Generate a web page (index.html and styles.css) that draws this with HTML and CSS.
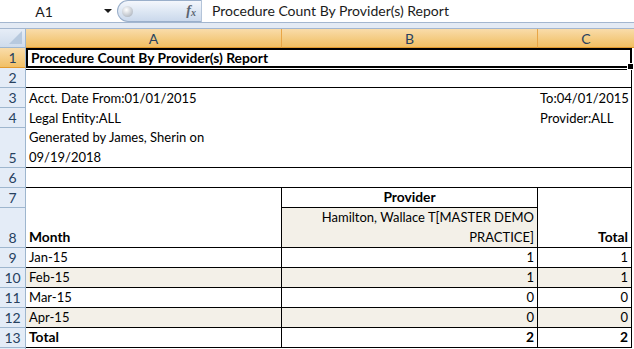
FILE: index.html
```html
<!DOCTYPE html>
<html lang="en">

<head>
    <meta charset="UTF-8">
    <meta name="viewport" content="width=device-width, initial-scale=1.0">
    <title>Procedure Count By Provider(s) Report</title>

    <!-- CSS styling -->
    <link rel="stylesheet" href="styles.css">
</head>

<body>
    <!-- Formula bar -->
    <div class="formula-bar">
        <div class="name-box">
            <span class="ref">A1</span>
            <span class="caret"></span>
        </div>
        <div class="fx-box">
            <span class="knob"></span>
            <span class="fx">f<sub>x</sub></span>
        </div>
        <div class="formula">Procedure Count By Provider(s) Report</div>
    </div>
    <div class="bar-gap"></div>

    <!-- Worksheet grid -->
    <div class="sheet">
        <!-- column headings -->
        <div class="corner"></div>
        <div class="col-head">A</div>
        <div class="col-head">B</div>
        <div class="col-head col-c">C</div>

        <!-- row 1 -->
        <div class="row-head sel">1</div>
        <div class="cell title span-all">Procedure Count By Provider(s) Report<span class="handle"></span></div>

        <!-- row 2 -->
        <div class="row-head">2</div>
        <div class="cell span-all bb br"></div>

        <!-- rows 3-5 -->
        <div class="row-head">3</div>
        <div class="cell span-ab">Acct. Date From:01/01/2015</div>
        <div class="cell col-c br">To:04/01/2015</div>

        <div class="row-head">4</div>
        <div class="cell span-ab">Legal Entity:ALL</div>
        <div class="cell col-c br">Provider:ALL</div>

        <div class="row-head">5</div>
        <div class="cell bb">Generated by James, Sherin on<br>09/19/2018</div>
        <div class="cell bb"></div>
        <div class="cell col-c bb br"></div>

        <!-- row 6 -->
        <div class="row-head">6</div>
        <div class="cell span-all bb br"></div>

        <!-- rows 7-8 : table heading -->
        <div class="row-head">7</div>
        <div class="cell br"></div>
        <div class="cell bold center bb br">Provider</div>
        <div class="cell col-c br"></div>

        <div class="row-head">8</div>
        <div class="cell bold bb br">Month</div>
        <div class="cell right band bb br">Hamilton, Wallace T[MASTER DEMO<br>PRACTICE]</div>
        <div class="cell col-c bold right bb br">Total</div>

        <!-- data rows -->
        <div class="row-head">9</div>
        <div class="cell bb br">Jan-15</div>
        <div class="cell right bb br">1</div>
        <div class="cell col-c right bb br">1</div>

        <div class="row-head">10</div>
        <div class="cell band bb br">Feb-15</div>
        <div class="cell band right bb br">1</div>
        <div class="cell col-c band right bb br">1</div>

        <div class="row-head">11</div>
        <div class="cell bb br">Mar-15</div>
        <div class="cell right bb br">0</div>
        <div class="cell col-c right bb br">0</div>

        <div class="row-head">12</div>
        <div class="cell band bb br">Apr-15</div>
        <div class="cell band right bb br">0</div>
        <div class="cell col-c band right bb br">0</div>

        <div class="row-head">13</div>
        <div class="cell bold bb br">Total</div>
        <div class="cell bold right bb br">2</div>
        <div class="cell col-c bold right bb br">2</div>

        <div class="row-head blank"></div>
    </div>
</body>

</html>
```

FILE: styles.css
```css
/* General body styles */
body {
    margin: 0;
    padding: 0;
    width: 634px;
    height: 349px;
    overflow: hidden;
    background-color: #ffffff;
    font-family: Lato, "Open Sans", sans-serif;
    font-size: 13px;
    color: #000000;
}

/* Formula bar */
.formula-bar {
    display: flex;
    height: 22px;
    background-color: #ffffff;
    border-bottom: 1px solid #a3b6cf;
}

.name-box {
    width: 117px;
    display: flex;
    align-items: center;
    box-sizing: border-box;
}

.name-box .ref {
    flex: 1;
    text-align: center;
    padding-right: 16px;
    font-size: 14px;
    color: #1b1b1b;
}

.name-box .caret {
    width: 0;
    height: 0;
    margin-right: 5px;
    border-left: 4px solid transparent;
    border-right: 4px solid transparent;
    border-top: 4px solid #1b1b1b;
}

/* Rounded fx button */
.fx-box {
    width: 84px;
    box-sizing: border-box;
    display: flex;
    align-items: center;
    justify-content: space-between;
    padding: 0 5px 0 4px;
    border: 1px solid #9aafca;
    border-right: none;
    border-radius: 11px 0 0 11px;
    background: linear-gradient(#f4f7fc, #dce6f3 55%, #cbd9ec);
}

.knob {
    width: 11px;
    height: 11px;
    border-radius: 50%;
    background: radial-gradient(circle at 40% 35%, #ffffff, #c4c9d0 60%, #9da6b2);
}

.fx {
    font-family: "Liberation Serif", serif;
    font-style: italic;
    font-weight: bold;
    font-size: 14px;
    color: #5b6470;
}

.fx sub {
    font-size: 10px;
    vertical-align: -1px;
}

.formula {
    flex: 1;
    padding-left: 10px;
    line-height: 22px;
    font-size: 14px;
    color: #1b1b1b;
    border-left: 1px solid #b4c4d9;
}

.bar-gap {
    height: 5px;
    background-color: #e3eaf4;
    border-bottom: 1px solid #a3b6cf;
}

/* Worksheet grid */
.sheet {
    display: grid;
    grid-template-columns: 26px 256px 256px 94px 2px;
    grid-template-rows: 19px 20px 20px 20px 20px 40px 20px 20px 40px 20px 20px 20px 20px 20px 20px;
}

.sheet > div {
    box-sizing: border-box;
}

.corner {
    background: linear-gradient(#e6edf7, #cfdcec);
    border-right: 1px solid #9eb6ce;
    border-bottom: 1px solid #9eb6ce;
    position: relative;
}

.corner::after {
    content: "";
    position: absolute;
    right: 3px;
    bottom: 3px;
    border-left: 13px solid transparent;
    border-bottom: 13px solid #b7c9de;
}

.col-head {
    text-align: center;
    font-size: 14px;
    line-height: 19px;
    color: #27415f;
    background: linear-gradient(#f9dcaa, #f4ca7e 60%, #f1bf63);
    border-right: 1px solid #e9a646;
    border-bottom: 1px solid #e29a2f;
}

.col-head.col-c {
    border-right: none;
}

.row-head {
    grid-column: 1;
    display: flex;
    align-items: flex-end;
    justify-content: center;
    line-height: 19px;
    font-size: 14px;
    color: #27415f;
    background-color: #e4ecf7;
    border-right: 1px solid #9eb6ce;
    border-bottom: 1px solid #9eb6ce;
}

.row-head.sel {
    background: linear-gradient(#f9dcaa, #f1c066);
    border-bottom-color: #e29a2f;
}

/* Cells */
.cell {
    padding: 0 3px;
    line-height: 20px;
    white-space: nowrap;
    display: flex;
    flex-direction: column;
    justify-content: flex-end;
    background-color: #ffffff;
}

.col-c {
    grid-column: 4 / span 2;
}

.cell.col-c {
    margin-right: 2px;
    padding-left: 2px;
}

.span-ab {
    grid-column: 2 / span 2;
}

.span-all {
    grid-column: 2 / span 4;
    margin-right: 2px;
}

.bb {
    border-bottom: 1px solid #000000;
}

.br {
    border-right: 1px solid #000000;
}

.bold {
    font-weight: bold;
    font-size: 13.8px;
}

.right {
    text-align: right;
}

.center {
    text-align: center;
}

.band {
    background-color: #f3f0e8;
}

/* Selected title cell */
.title {
    position: relative;
    font-weight: bold;
    font-size: 13.8px;
    line-height: 16px;
    justify-content: center;
    border: 2px solid #000000;
    box-shadow: 0 1px 0 #ffffff, 0 2px 0 #000000;
}

.handle {
    position: absolute;
    right: -4px;
    bottom: -4px;
    width: 5px;
    height: 5px;
    background-color: #000000;
    border: 1px solid #ffffff;
}
```
